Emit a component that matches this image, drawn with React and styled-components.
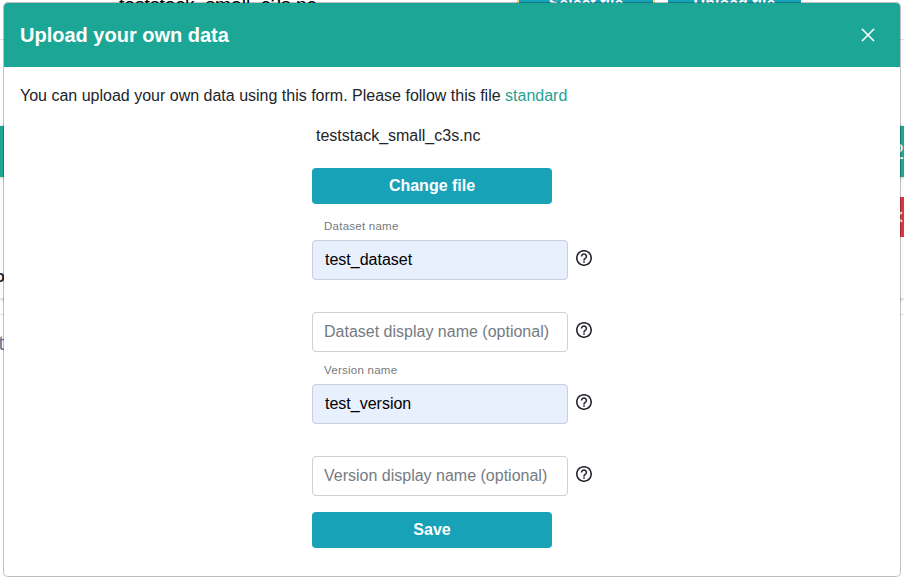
import React from "react";
import styled, { createGlobalStyle } from "styled-components";
import { MdHelpOutline } from "react-icons/md";

const GlobalStyle = createGlobalStyle`
  *, *::before, *::after { box-sizing: border-box; }
  body {
    margin: 0;
    background: #fff;
    color: #212529;
    font: 16px/24px "Liberation Sans", Arial, sans-serif;
  }
`;

const Screen = styled.div`
  position: relative;
  width: 904px;
  height: 582px;
  overflow: hidden;
`;

const Page = styled.div`
  display: flex;
  flex-direction: column;
  height: 100%;
`;

const UploadBar = styled.div`
  display: flex;
  align-items: flex-start;
  height: 40px;
  padding-left: 119px;
  border-bottom: 1px solid #dee2e6;
`;

const UploadedFile = styled.span`
  width: 398px;
  margin-top: -7px;
  color: #000;
  font-size: 19.2px;
`;

const BarButton = styled.button`
  width: ${(p) => (p.$focused ? 138 : 133)}px;
  height: 32px;
  margin: -17px 13px 0 0;
  padding: 6px 0 0;
  border: 0 solid #ffd36b;
  border-width: ${(p) => (p.$focused ? "0 2px" : "0")};
  background: #17a2b8;
  color: #fff;
  font: bold 16px/30px "Liberation Sans", Arial, sans-serif;
`;

const DataCard = styled.div`
  margin-top: 86px;
  height: 172px;
  background: #fcfcfd;
  box-shadow: 0 1px 4px rgba(0, 0, 0, 0.3);
`;

const CardHeader = styled.div`
  display: flex;
  justify-content: flex-end;
  height: 51px;
  padding-top: 14px;
  background: #1ca696;
  color: #fff;
  font-size: 22px;
  box-shadow: 0 1px 3px rgba(0, 0, 0, 0.25);
`;

const CardBody = styled.div`
  display: flex;
  justify-content: space-between;
  padding-top: 20px;
`;

const EdgeLabel = styled.div`
  display: flex;
  justify-content: flex-end;
  width: ${(p) => p.$width}px;
  margin-top: ${(p) => p.$top}px;
  color: ${(p) => p.$color};
  font-size: ${(p) => p.$size}px;
  font-weight: ${(p) => (p.$bold ? 700 : 400)};
`;

const DeleteButton = styled.div`
  display: flex;
  align-items: center;
  justify-content: flex-end;
  width: 5px;
  height: 40px;
  background: #dc3545;
  color: #fff;
  font-size: 24px;
`;

const Divider = styled.div`
  margin-top: 16px;
  border-top: 1px solid #dee2e6;
`;

const Modal = styled.section`
  position: absolute;
  top: 2px;
  left: 3px;
  width: 898px;
  height: 575px;
  border: 1px solid rgba(0, 0, 0, 0.25);
  border-radius: 5px;
  background: #fff;
  background-clip: padding-box;
`;

const ModalHeader = styled.header`
  display: flex;
  align-items: center;
  justify-content: space-between;
  height: 64px;
  padding: 0 25px 0 16px;
  border-radius: 4px 4px 0 0;
  background: #1ca696;
  color: #fff;
`;

const Title = styled.h1`
  margin: 0;
  font-size: 20px;
  line-height: 30px;
`;

const CloseButton = styled.button`
  display: flex;
  padding: 0;
  border: 0;
  background: none;
  color: #fff;
`;

const Intro = styled.p`
  margin: 17px 16px 0;
`;

const StandardLink = styled.a`
  color: #28a18f;
`;

const Form = styled.form`
  display: flex;
  flex-direction: column;
  width: 290px;
  margin: 16px 0 0 308px;
`;

const FileName = styled.div`
  padding-left: 4px;
  margin-bottom: 20px;
`;

const ActionButton = styled.button`
  width: 240px;
  height: 36px;
  padding: 0 0 1px;
  border: 0;
  border-radius: 4px;
  background: #18a2b8;
  color: #fff;
  font: bold 16px/24px "Liberation Sans", Arial, sans-serif;
`;

const Field = styled.div`
  display: grid;
  grid-template-columns: 256px 20px;
  grid-template-rows: 36px 40px;
  column-gap: 6px;
  height: 72px;
  margin-bottom: ${(p) => (p.$last ? 20 : 0)}px;
`;

const Label = styled.label`
  grid-column: 1 / 3;
  padding: 13px 12px 0;
  color: #757a80;
  font-size: 11.5px;
  letter-spacing: 0.25px;
  line-height: 18px;
`;

const Input = styled.input`
  width: 256px;
  height: 40px;
  padding: 0 11px 1px ${(p) => (p.$filled ? 12 : 11)}px;
  border: 1px solid ${(p) => (p.$filled ? "#cbcfe3" : "#ced0d6")};
  border-radius: 4px;
  outline: 0;
  background: ${(p) => (p.$filled ? "#e8effd" : "#fff")};
  color: #000;
  font: 16px/24px "Liberation Sans", Arial, sans-serif;
  &::placeholder { color: #757b82; opacity: 1; }
`;

const HelpIcon = styled(MdHelpOutline)`
  margin-top: 8px;
  color: #212529;
`;

const fields = [
  { label: "Dataset name", value: "test_dataset" },
  { placeholder: "Dataset display name (optional)" },
  { label: "Version name", value: "test_version" },
  { placeholder: "Version display name (optional)" },
];

export default function App() {
  return (
    <Screen>
      <GlobalStyle />
      <Page>
        <UploadBar>
          <UploadedFile>teststack_small_c3s.nc</UploadedFile>
          <BarButton $focused>Select file</BarButton>
          <BarButton>Upload file</BarButton>
        </UploadBar>
        <DataCard>
          <CardHeader>2</CardHeader>
          <CardBody>
            <EdgeLabel $top={68} $width={5} $size={16} $color="#212529" $bold>o</EdgeLabel>
            <DeleteButton>×</DeleteButton>
          </CardBody>
        </DataCard>
        <Divider />
        <EdgeLabel $top={16} $width={4} $size={20} $color="#6c7293">t</EdgeLabel>
      </Page>
      <Modal role="dialog">
        <ModalHeader>
          <Title>Upload your own data</Title>
          <CloseButton aria-label="Close">
            <svg width="14" height="14" viewBox="0 0 14 14" fill="none" stroke="currentColor" strokeWidth="1.6" strokeLinecap="round">
              <path d="M1.3 1.3l11.4 11.4M12.7 1.3L1.3 12.7" />
            </svg>
          </CloseButton>
        </ModalHeader>
        <Intro>
          You can upload your own data using this form. Please follow this file <StandardLink>standard</StandardLink>
        </Intro>
        <Form>
          <FileName>teststack_small_c3s.nc</FileName>
          <ActionButton type="button">Change file</ActionButton>
          {fields.map((f, i) => (
            <Field key={i} $last={i === fields.length - 1}>
              <Label>{f.label}</Label>
              <Input $filled={!!f.value} defaultValue={f.value} placeholder={f.placeholder} />
              <HelpIcon size={20} viewBox="-0.5 -0.5 25 25" />
            </Field>
          ))}
          <ActionButton type="button">Save</ActionButton>
        </Form>
      </Modal>
    </Screen>
  );
}
